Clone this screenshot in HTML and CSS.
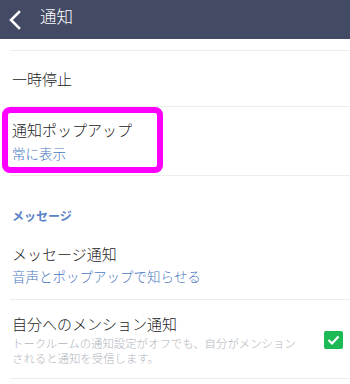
FILE: index.html
```html
<html>
<head>
	<meta charset="utf-8">
	<link rel="stylesheet" href="styles.css">
</head>
<body>

<div class="header">
	<svg class="back" width="30" height="32" viewBox="0 0 30 32">
		<polyline points="19,8 11,16 19,24" fill="none" stroke="#fff" stroke-width="2.6" stroke-linecap="square"/>
	</svg>
	<div class="title">通知</div>
</div>

<div class="list">
	<div class="top-edge"></div>

	<div class="row single">
		<div class="label">一時停止</div>
	</div>

	<div class="row popup">
		<div class="text">
			<div class="label">通知ポップアップ</div>
			<div class="value">常に表示</div>
		</div>
		<div class="highlight"></div>
	</div>

	<div class="section">メッセージ</div>

	<div class="row">
		<div class="text">
			<div class="label">メッセージ通知</div>
			<div class="value">音声とポップアップで知らせる</div>
		</div>
	</div>

	<div class="row mention">
		<div class="text">
			<div class="label">自分へのメンション通知</div>
			<div class="note">トークルームの通知設定がオフでも、自分がメンション<br>されると通知を受信します。</div>
		</div>
		<div class="check">
			<svg width="19" height="18" viewBox="0 0 19 18">
				<polyline points="4.5,9 8,12.5 14.5,5.5" fill="none" stroke="#fff" stroke-width="2.2"/>
			</svg>
		</div>
	</div>
</div>

</body>
</html>
```

FILE: styles.css
```css
body {
	margin: 0;
	background: #fff;
	font-family: "Noto Sans CJK JP", "Noto Sans", sans-serif;
	font-weight: 300;
	color: #222;
}

.header {
	height: 39px;
	background: #434a63;
	display: flex;
	align-items: center;
}

.header .back {
	margin-left: 0;
	margin-top: 1px;
}

.header .title {
	margin-left: 10px;
	color: #fff;
	font-size: 16.5px;
	line-height: 22px;
	margin-top: -7px;
}

.list {
	position: relative;
}

.top-edge {
	height: 11px;
	margin-left: 10px;
	border-bottom: 1px solid #ececec;
}

.row {
	margin-left: 10px;
	padding-left: 2px;
	border-bottom: 1px solid #ececec;
	display: flex;
	align-items: center;
}

.row .text {
	flex: 1;
}

.row.single {
	height: 55px;
}

.label {
	font-size: 15px;
	line-height: 22px;
}

.value {
	font-size: 13.5px;
	line-height: 22px;
	color: #4a78c2;
}

.popup {
	position: relative;
	padding-top: 12px;
	padding-bottom: 10px;
}

.popup .value {
	line-height: 24px;
}

.row:not(.single):not(.popup) {
	padding-top: 13px;
	padding-bottom: 12px;
}

.row.mention {
	padding-bottom: 13px;
}

.highlight {
	position: absolute;
	left: -8px;
	top: 0;
	width: 149px;
	height: 54px;
	border: 6px solid #ff00ff;
	border-radius: 8px;
}

.section {
	padding: 30px 0 4px 12px;
	font-size: 12px;
	line-height: 20px;
	font-weight: bold;
	color: #5b82c6;
}

.note {
	font-size: 11.4px;
	line-height: 15px;
	color: #b1b5bd;
	margin-top: 1px;
}

.check {
	width: 19px;
	height: 18px;
	margin-right: 7px;
	border-radius: 2px;
	background: #1db954;
	display: flex;
}
```
